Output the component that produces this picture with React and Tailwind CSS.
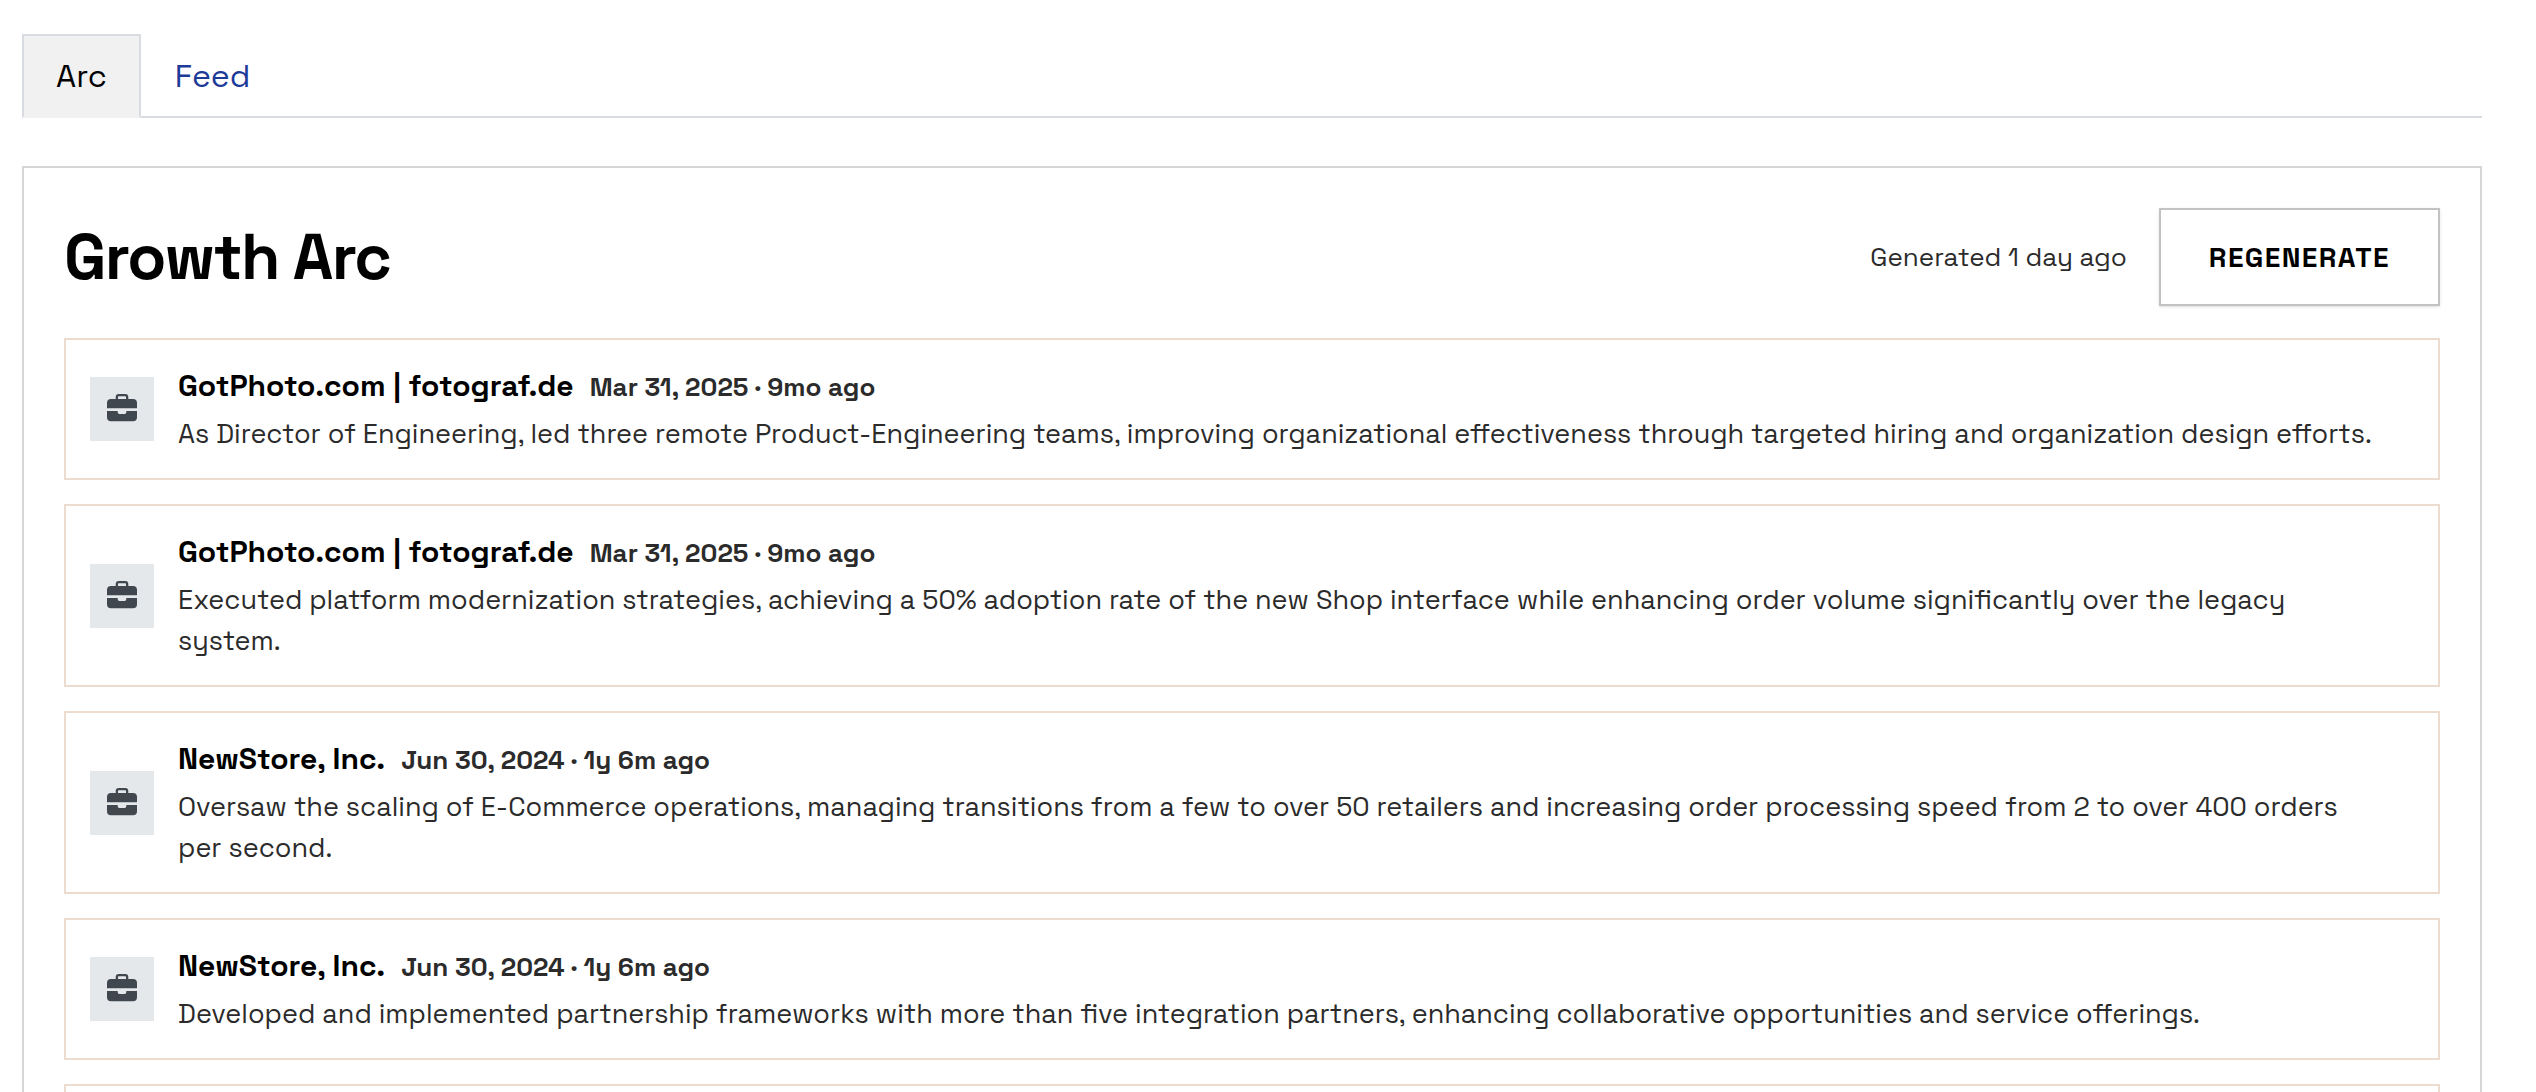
import { useState } from 'react'
import { clsx } from 'clsx'

const TABS = [
  { id: 'arc', label: 'Arc' },
  { id: 'feed', label: 'Feed' },
]

const EVENTS = [
  {
    company: 'GotPhoto.com | fotograf.de',
    date: 'Mar 31, 2025 · 9mo ago',
    text: 'As Director of Engineering, led three remote Product-Engineering teams, improving organizational effectiveness through targeted hiring and organization design efforts.',
  },
  {
    company: 'GotPhoto.com | fotograf.de',
    date: 'Mar 31, 2025 · 9mo ago',
    text: 'Executed platform modernization strategies, achieving a 50% adoption rate of the new Shop interface while enhancing order volume significantly over the legacy system.',
  },
  {
    company: 'NewStore, Inc.',
    date: 'Jun 30, 2024 · 1y 6m ago',
    text: 'Oversaw the scaling of E-Commerce operations, managing transitions from a few to over 50 retailers and increasing order processing speed from 2 to over 400 orders per second.',
  },
  {
    company: 'NewStore, Inc.',
    date: 'Jun 30, 2024 · 1y 6m ago',
    text: 'Developed and implemented partnership frameworks with more than five integration partners, enhancing collaborative opportunities and service offerings.',
  },
]

function BriefcaseIcon() {
  return (
    <svg viewBox="0 0 32 32" className="size-8 fill-[#40474f]" aria-hidden="true">
      <path
        fillRule="evenodd"
        d="M9.7 6V4a3 3 0 0 1 3-3h6.6a3 3 0 0 1 3 3v2H27a4 4 0 0 1 4 4v5.3H1V10a4 4 0 0 1 4-4zM12 6h8V4a.7.7 0 0 0-.7-.7h-6.6a.7.7 0 0 0-.7.7z"
      />
      <path d="M1 18h10.7v1.3a1.7 1.7 0 0 0 1.7 1.7h5.2a1.7 1.7 0 0 0 1.7-1.7V18H31v6.3a4 4 0 0 1-4 4H5a4 4 0 0 1-4-4z" />
    </svg>
  )
}

function Tabs({ active, onChange }) {
  return (
    <nav className="flex border-b-2 border-[#d8dce0]">
      {TABS.map(tab => (
        <a
          key={tab.id}
          href={`#${tab.id}`}
          onClick={() => onChange(tab.id)}
          className={clsx(
            '-mb-0.5 border-2 px-8 py-5 text-[32px] leading-10',
            active === tab.id
              ? 'border-[#d8dce0] border-b-[#f1f1f1] bg-[#f1f1f1] text-black'
              : 'border-transparent text-[#1c3a98]'
          )}
        >
          {tab.label}
        </a>
      ))}
    </nav>
  )
}

function EventCard({ event }) {
  return (
    <li className="flex items-center gap-6 border-2 border-[#ecdccf] py-6 pr-14 pl-6">
      <div className="flex size-16 shrink-0 items-center justify-center bg-[#e4e8eb]">
        <BriefcaseIcon />
      </div>
      <div className="min-w-0">
        <div className="mb-[5px] flex items-baseline gap-4">
          <h3 className="text-[30px] leading-[44px] font-bold text-black">{event.company}</h3>
          <span className="text-[26px] leading-8 font-semibold">{event.date}</span>
        </div>
        <p className="text-[27px] leading-[41px]">{event.text}</p>
      </div>
    </li>
  )
}

export default function App() {
  const [tab, setTab] = useState('arc')
  return (
    <div className="h-screen overflow-hidden bg-white pt-[34px] pr-[54px] pl-[22px] font-['Space_Grotesk','Inter',sans-serif] text-[#2b2b2b]">
      <Tabs active={tab} onChange={setTab} />
      <section className="mt-12 border-2 border-[#d6d6d6] p-10">
        <header className="mb-8 flex items-center justify-between">
          <h2 className="text-[64px] leading-[72px] font-bold tracking-tight text-black">Growth Arc</h2>
          <div className="flex items-center gap-8">
            <span className="text-[26px]">Generated 1 day ago</span>
            <button
              type="button"
              className="h-[98px] border-2 border-[#c2c2c2] px-12 text-[28px] font-bold tracking-wider text-black uppercase shadow-sm"
            >
              Regenerate
            </button>
          </div>
        </header>
        <ul className="flex flex-col gap-6">
          {EVENTS.map((event, i) => (
            <EventCard key={i} event={event} />
          ))}
          <li className="h-36 border-2 border-[#ecdccf]" />
        </ul>
      </section>
    </div>
  )
}
